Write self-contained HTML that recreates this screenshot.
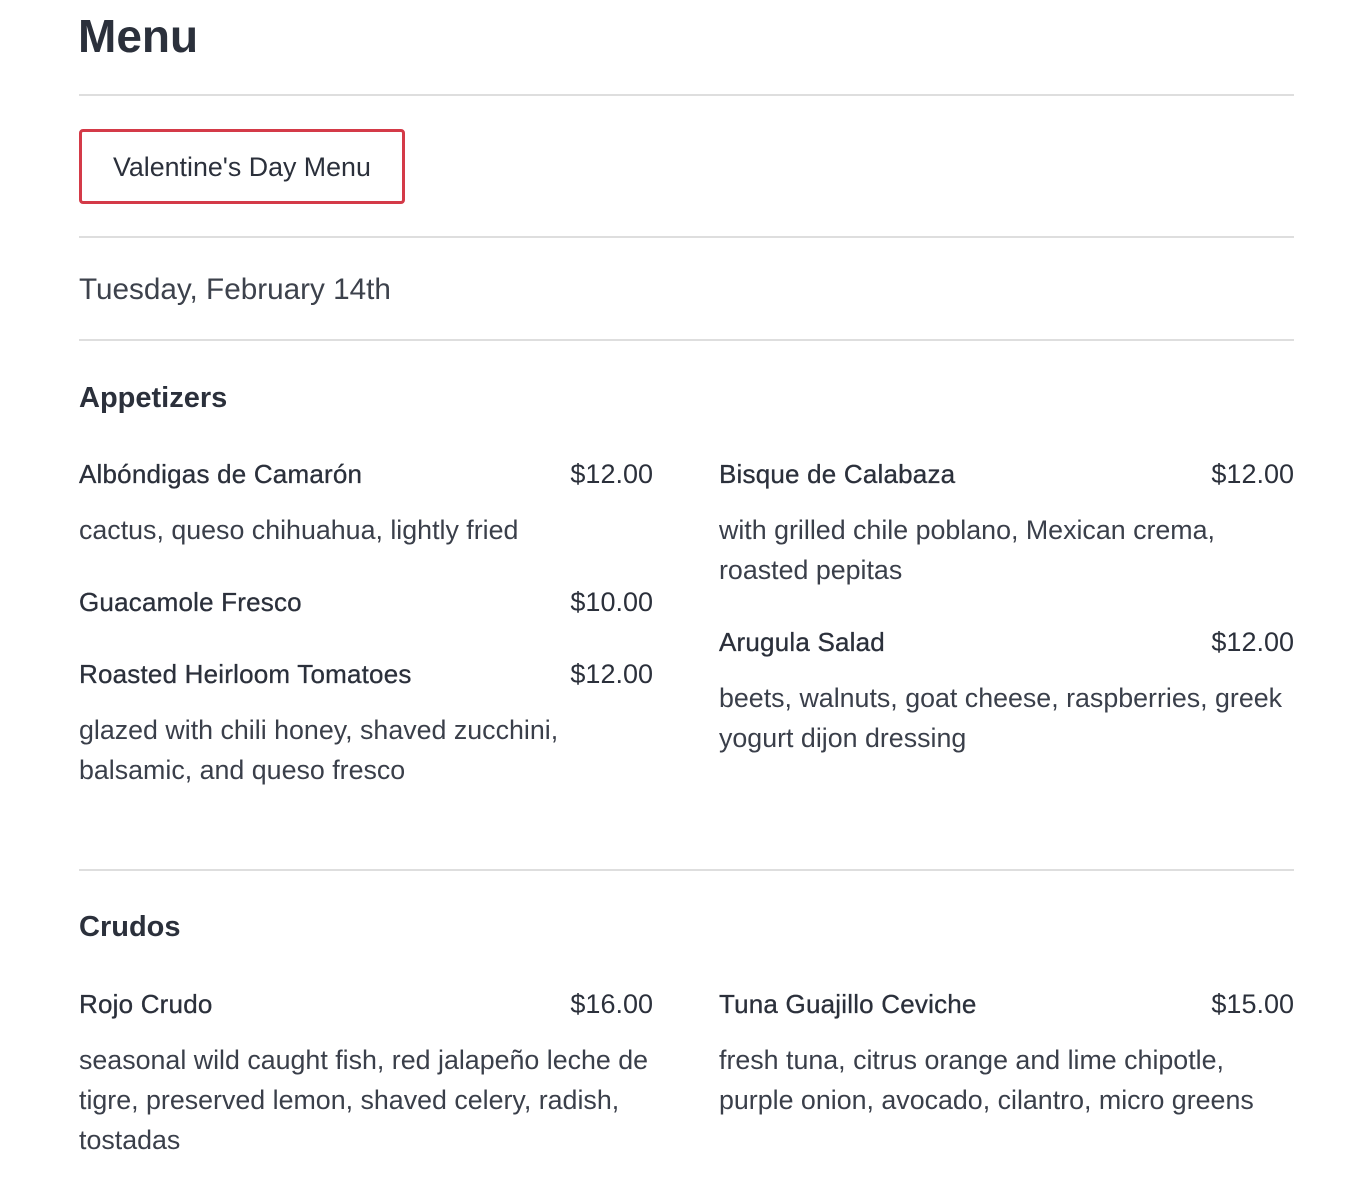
<!DOCTYPE html>
<html><head><meta charset="utf-8"><style>
body{margin:0;width:1364px;height:1202px;background:#fff;position:relative;overflow:hidden;font-family:"Liberation Sans",sans-serif;color:#2b303b}
.t{position:absolute;white-space:nowrap;line-height:40px;height:40px;font-size:26.5px}
.n{font-size:26px;letter-spacing:0.2px;-webkit-text-stroke:0.3px #2b303b}
.p{font-size:27px;text-align:right;width:200px}
.d{color:#3a3f4a;font-size:26.8px}
.hr{position:absolute;left:79px;width:1215px;height:2px;background:#dedede}
.h{font-weight:bold;font-size:29px}
</style></head><body>
<div class="t" style="left:78px;top:12px;font-size:46px;font-weight:bold;line-height:48px;height:48px">Menu</div>
<div class="hr" style="top:94px"></div>
<div style="position:absolute;left:79px;top:129px;width:320px;height:69px;border:3px solid #d43a48;border-radius:4px"></div>
<div class="t" style="left:113px;top:147px;font-size:26.8px">Valentine's Day Menu</div>
<div class="hr" style="top:236px"></div>
<div class="t" style="left:79px;top:270px;font-size:29.7px;color:#3d424c">Tuesday, February 14th</div>
<div class="hr" style="top:339px"></div>
<div class="t h" style="left:79px;top:378px">Appetizers</div>

<div class="t n" style="left:79px;top:454px">Albóndigas de Camarón</div>
<div class="t p" style="left:453px;top:454px">$12.00</div>
<div class="t d" style="left:79px;top:510px">cactus, queso chihuahua, lightly fried</div>
<div class="t n" style="left:79px;top:582px">Guacamole Fresco</div>
<div class="t p" style="left:453px;top:582px">$10.00</div>
<div class="t n" style="left:79px;top:654px">Roasted Heirloom Tomatoes</div>
<div class="t p" style="left:453px;top:654px">$12.00</div>
<div class="t d" style="left:79px;top:710px">glazed with chili honey, shaved zucchini,</div>
<div class="t d" style="left:79px;top:750px">balsamic, and queso fresco</div>

<div class="t n" style="left:719px;top:454px">Bisque de Calabaza</div>
<div class="t p" style="left:1094px;top:454px">$12.00</div>
<div class="t d" style="left:719px;top:510px">with grilled chile poblano, Mexican crema,</div>
<div class="t d" style="left:719px;top:550px">roasted pepitas</div>
<div class="t n" style="left:719px;top:622px">Arugula Salad</div>
<div class="t p" style="left:1094px;top:622px">$12.00</div>
<div class="t d" style="left:719px;top:678px">beets, walnuts, goat cheese, raspberries, greek</div>
<div class="t d" style="left:719px;top:718px">yogurt dijon dressing</div>

<div class="hr" style="top:869px"></div>
<div class="t h" style="left:79px;top:907px">Crudos</div>
<div class="t n" style="left:79px;top:984px">Rojo Crudo</div>
<div class="t p" style="left:453px;top:984px">$16.00</div>
<div class="t d" style="left:79px;top:1040px">seasonal wild caught fish, red jalapeño leche de</div>
<div class="t d" style="left:79px;top:1080px">tigre, preserved lemon, shaved celery, radish,</div>
<div class="t d" style="left:79px;top:1120px">tostadas</div>
<div class="t n" style="left:719px;top:984px">Tuna Guajillo Ceviche</div>
<div class="t p" style="left:1094px;top:984px">$15.00</div>
<div class="t d" style="left:719px;top:1040px">fresh tuna, citrus orange and lime chipotle,</div>
<div class="t d" style="left:719px;top:1080px">purple onion, avocado, cilantro, micro greens</div>
</body></html>
